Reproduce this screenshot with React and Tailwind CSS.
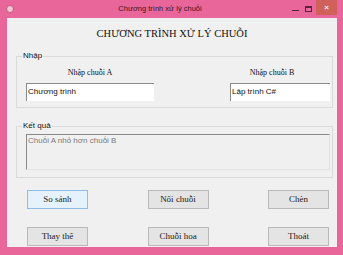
import React from 'react';

const serif = { fontFamily: '"Liberation Serif", "Times New Roman", serif' };

function Btn({ children, active }) {
  return (
    <button
      className={
        active
          ? 'w-[61px] h-[19px] border border-[#8fbde9] bg-[#e5f1fb] text-[9px] leading-[17px] text-[#222]'
          : 'w-[61px] h-[19px] border border-[#b9b9b9] bg-[#e4e4e4] text-[9px] leading-[17px] text-[#222]'
      }
      style={serif}
    >
      {children}
    </button>
  );
}

export default function App() {
  return (
    <div className="w-[343px] h-[255px] bg-[#e8669a] flex flex-col" style={{ fontFamily: '"Liberation Sans", Arial, sans-serif' }}>
      {/* title bar */}
      <div className="h-[18px] flex items-center">
        <div className="ml-[6px] w-[8px] h-[8px] rounded-full bg-[#f4c7d6] border border-[#c0587f]"></div>
        <div className="flex-1 text-center text-[7.5px] text-[#3a1626] pl-[14px]">Chương trình xử lý chuỗi</div>
        <div className="flex items-center h-full">
          <span className="w-[7px] h-[1px] bg-[#5a2236] mt-[3px] mr-[6px]"></span>
          <span className="w-[7px] h-[6px] border border-[#5a2236] border-t-2 mr-[4px]"></span>
          <div className="w-[21px] h-[15px] self-start bg-[#d0605a] flex items-center justify-center text-white text-[8px] font-bold mr-[6px]">×</div>
        </div>
      </div>

      {/* client */}
      <div className="ml-[7px] mr-[6px] h-[229px] bg-[#f0f0f0] flex flex-col">
        <div className="text-center text-[10.5px] text-[#111] mt-[10px] leading-[12px]" style={serif}>
          CHƯƠNG TRÌNH XỬ LÝ CHUỖI
        </div>

        {/* Nhap group */}
        <div className="relative mt-[16px] ml-[9px] mr-[4px] h-[52px] border border-[#dadada]">
          <span className="absolute -top-[6px] left-[5px] bg-[#f0f0f0] px-[1px] text-[8px] leading-[10px] text-[#111]">Nhập</span>
          <div className="flex justify-between pl-[9px] pr-[2px] pt-[11px]">
            <div className="w-[128px] flex flex-col">
              <span className="text-center text-[8px] leading-[9px] text-[#111] mb-[6px]" style={serif}>Nhập chuỗi A</span>
              <div className="h-[18px] bg-white border-t border-l border-[#8a8a8a] text-[8px] leading-[16px] pl-[1px] text-[#111]">Chương trình</div>
            </div>
            <div className="w-[100px] flex flex-col">
              <span className="text-center pr-[16px] text-[8px] leading-[9px] text-[#111] mb-[6px]" style={serif}>Nhập chuỗi B</span>
              <div className="h-[18px] bg-white border-t border-l border-[#8a8a8a] text-[8px] leading-[16px] pl-[1px] text-[#111]">Lập trình C#</div>
            </div>
          </div>
        </div>

        {/* Ket qua group */}
        <div className="relative mt-[18px] ml-[9px] mr-[4px] h-[52px] border border-[#dadada]">
          <span className="absolute -top-[6px] left-[5px] bg-[#f0f0f0] px-[1px] text-[8px] leading-[10px] text-[#111]">Kết quả</span>
          <div className="ml-[9px] mr-[2px] mt-[7px] h-[36px] border-t border-l border-[#8a8a8a] border-r border-b border-r-[#e3e3e3] border-b-[#e3e3e3] text-[8px] leading-[11px] pl-[1px] text-[#7a7a7a]">
            Chuỗi A nhỏ hơn chuỗi B
          </div>
        </div>

        {/* buttons */}
        <div className="flex flex-col gap-[18px] mt-[12px] pl-[20px] pr-[8px]">
          <div className="flex justify-between">
            <Btn active>So sánh</Btn>
            <Btn>Nối chuỗi</Btn>
            <Btn>Chèn</Btn>
          </div>
          <div className="flex justify-between">
            <Btn>Thay thế</Btn>
            <Btn>Chuỗi hoa</Btn>
            <Btn>Thoát</Btn>
          </div>
        </div>
      </div>
    </div>
  );
}
